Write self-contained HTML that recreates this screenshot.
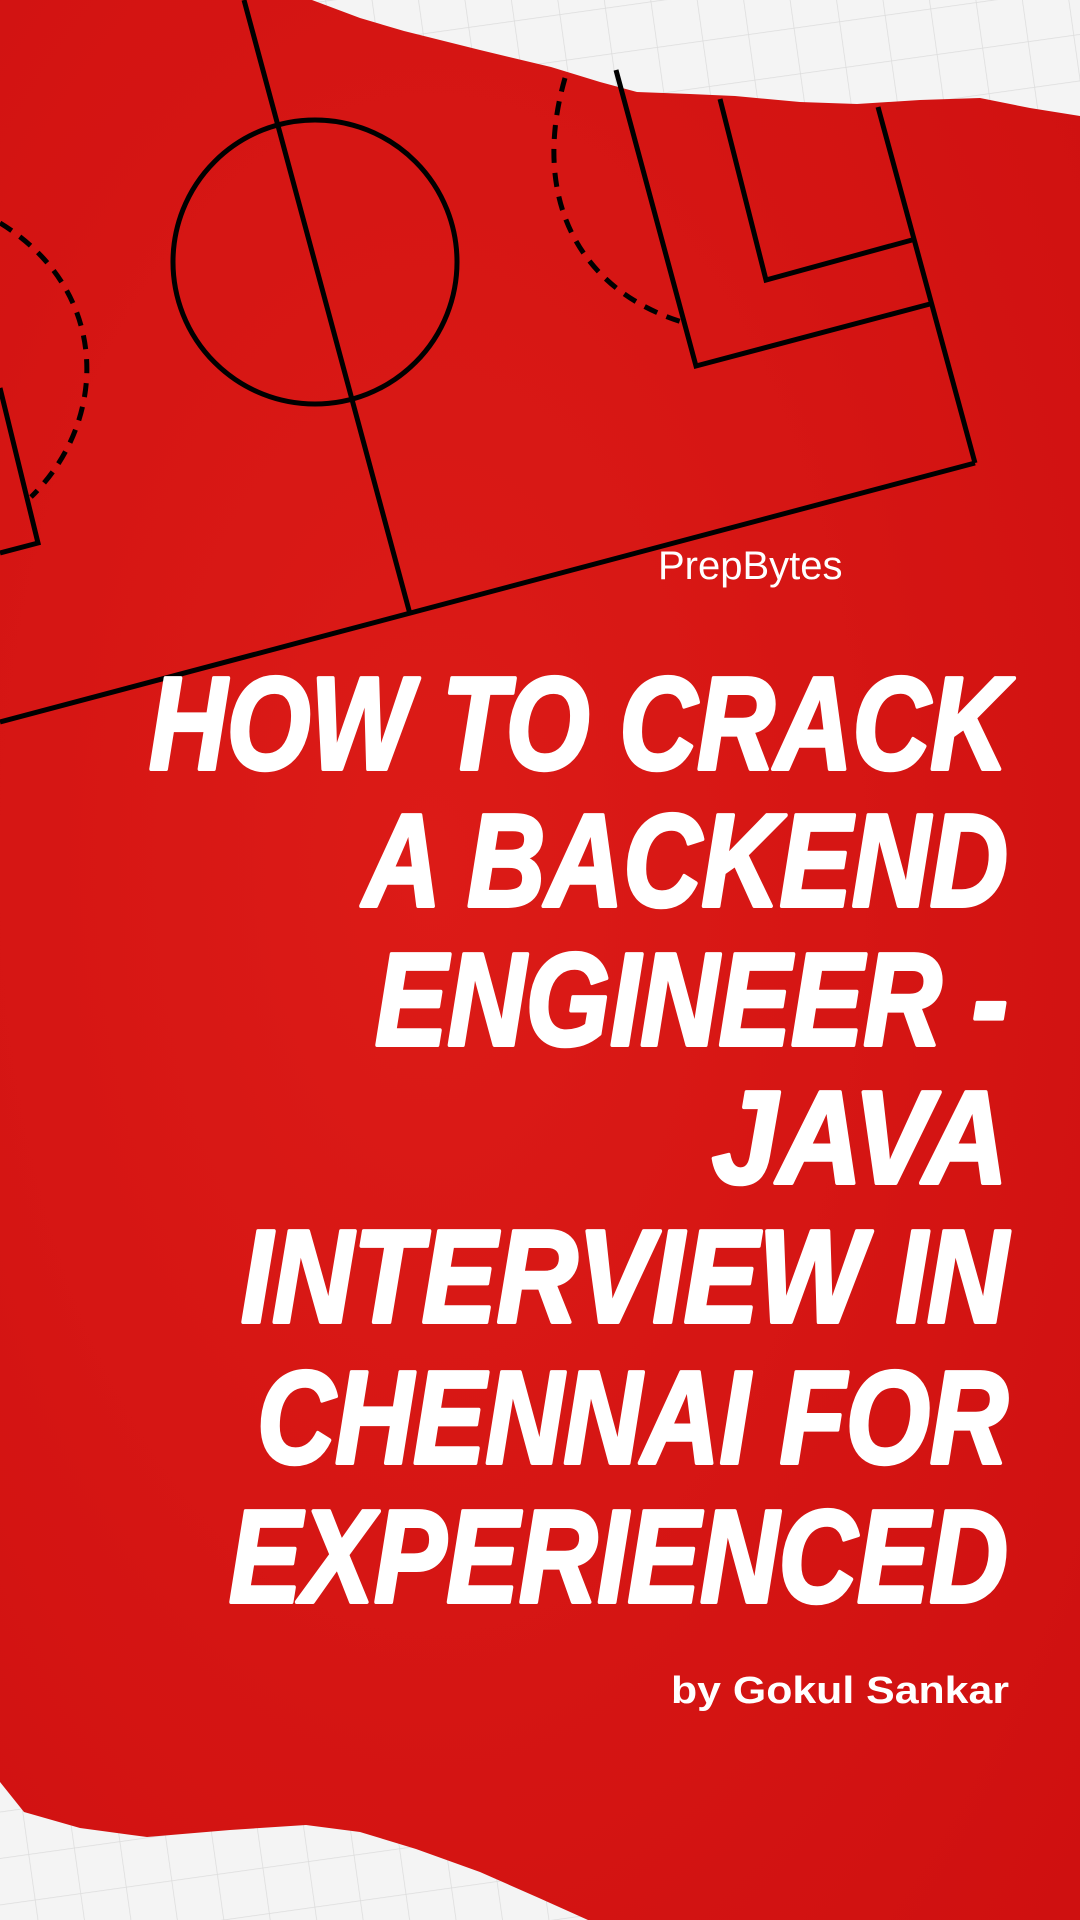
<!DOCTYPE html>
<html><head><meta charset="utf-8"><style>
html,body{margin:0;padding:0;width:1080px;height:1920px;overflow:hidden;background:#d51614}
svg{display:block}
</style></head><body>
<svg width="1080" height="1920" viewBox="0 0 1080 1920" xmlns="http://www.w3.org/2000/svg">
<defs>
<radialGradient id="rg" cx="0.4" cy="0.45" r="0.8">
<stop offset="0" stop-color="#dc1b17"/><stop offset="1" stop-color="#cf1010"/></radialGradient>
<pattern id="grid" width="46" height="46" patternUnits="userSpaceOnUse" patternTransform="rotate(-8)">
<rect width="46" height="46" fill="#f4f4f4"/>
<path d="M0 0H46M0 0V46" stroke="#dcdcdc" stroke-width="1.5" fill="none"/></pattern>
</defs>
<rect width="1080" height="1920" fill="url(#rg)"/>
<path d="M312 0 L360 18 L404 31 L480 50 L551 67 L600 82 L637 92 L690 94 L735 96 L800 102 L857 104 L920 100 L980 98 L1030 108 L1080 116 L1080 0 Z" fill="url(#grid)"/>
<path d="M0 1782 L24 1812 L80 1828 L147 1837 L230 1830 L306 1825 L360 1832 L416 1849 L480 1872 L539 1898 L588 1920 L0 1920 Z" fill="url(#grid)"/>
<g stroke="#000" stroke-width="5" fill="none">
<line x1="244" y1="0" x2="410" y2="614"/>
<circle cx="315" cy="262" r="142"/>
<line x1="0" y1="722" x2="975" y2="463"/>
<polyline points="616,70 696,366 930,304"/>
<polyline points="720,99 766,280 912,240"/>
<line x1="878" y1="107" x2="975" y2="463"/>
<polyline points="0,388 38,543 0,553"/>
<path d="M565 78 C530 200 580 290 682 322" stroke-dasharray="14 10"/>
<path d="M0 223 C110 290 110 420 31 497" stroke-dasharray="14 10"/>
</g>
<text x="658" y="579" fill="#fff" font-family="Liberation Sans, sans-serif" font-size="40" font-weight="300">PrepBytes</text>
<g fill="#fff" stroke="#fff" stroke-width="4" stroke-linejoin="round" font-family="Liberation Sans, sans-serif" font-weight="bold" font-style="italic" font-size="132">
<text x="149" y="769" textLength="859" lengthAdjust="spacingAndGlyphs">HOW TO CRACK</text>
<text x="363" y="906" textLength="645" lengthAdjust="spacingAndGlyphs">A BACKEND</text>
<text x="375" y="1045" textLength="633" lengthAdjust="spacingAndGlyphs">ENGINEER -</text>
<text x="712" y="1183" textLength="296" lengthAdjust="spacingAndGlyphs">JAVA</text>
<text x="241" y="1322" textLength="767" lengthAdjust="spacingAndGlyphs">INTERVIEW IN</text>
<text x="257" y="1463" textLength="751" lengthAdjust="spacingAndGlyphs">CHENNAI FOR</text>
<text x="229" y="1602" textLength="779" lengthAdjust="spacingAndGlyphs">EXPERIENCED</text>
</g>
<text x="671" y="1703" fill="#fff" font-family="Liberation Sans, sans-serif" font-size="38" font-weight="bold" textLength="338" lengthAdjust="spacingAndGlyphs">by Gokul Sankar</text>
</svg>
</body></html>
